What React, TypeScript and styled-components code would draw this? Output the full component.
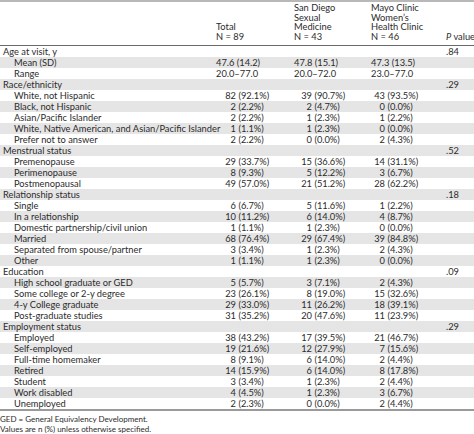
import styled, { createGlobalStyle } from 'styled-components';

type Value = string | [number, string];

interface Line {
  label: string;
  sub?: boolean;
  values?: Value[];
  p?: string;
}

const lines: Line[] = [
  { label: 'Age at visit, y', p: '.84' },
  { label: 'Mean (SD)', sub: true, values: ['47.6 (14.2)', '47.8 (15.1)', '47.3 (13.5)'] },
  { label: 'Range', sub: true, values: ['20.0–77.0', '20.0–72.0', '23.0–77.0'] },
  { label: 'Race/ethnicity', p: '.29' },
  { label: 'White, not Hispanic', sub: true, values: [[82, '92.1%'], [39, '90.7%'], [43, '93.5%']] },
  { label: 'Black, not Hispanic', sub: true, values: [[2, '2.2%'], [2, '4.7%'], [0, '0.0%']] },
  { label: 'Asian/Pacific Islander', sub: true, values: [[2, '2.2%'], [1, '2.3%'], [1, '2.2%']] },
  { label: 'White, Native American, and Asian/Pacific Islander', sub: true, values: [[1, '1.1%'], [1, '2.3%'], [0, '0.0%']] },
  { label: 'Prefer not to answer', sub: true, values: [[2, '2.2%'], [0, '0.0%'], [2, '4.3%']] },
  { label: 'Menstrual status', p: '.52' },
  { label: 'Premenopause', sub: true, values: [[29, '33.7%'], [15, '36.6%'], [14, '31.1%']] },
  { label: 'Perimenopause', sub: true, values: [[8, '9.3%'], [5, '12.2%'], [3, '6.7%']] },
  { label: 'Postmenopausal', sub: true, values: [[49, '57.0%'], [21, '51.2%'], [28, '62.2%']] },
  { label: 'Relationship status', p: '.18' },
  { label: 'Single', sub: true, values: [[6, '6.7%'], [5, '11.6%'], [1, '2.2%']] },
  { label: 'In a relationship', sub: true, values: [[10, '11.2%'], [6, '14.0%'], [4, '8.7%']] },
  { label: 'Domestic partnership/civil union', sub: true, values: [[1, '1.1%'], [1, '2.3%'], [0, '0.0%']] },
  { label: 'Married', sub: true, values: [[68, '76.4%'], [29, '67.4%'], [39, '84.8%']] },
  { label: 'Separated from spouse/partner', sub: true, values: [[3, '3.4%'], [1, '2.3%'], [2, '4.3%']] },
  { label: 'Other', sub: true, values: [[1, '1.1%'], [1, '2.3%'], [0, '0.0%']] },
  { label: 'Education', p: '.09' },
  { label: 'High school graduate or GED', sub: true, values: [[5, '5.7%'], [3, '7.1%'], [2, '4.3%']] },
  { label: 'Some college or 2-y degree', sub: true, values: [[23, '26.1%'], [8, '19.0%'], [15, '32.6%']] },
  { label: '4-y College graduate', sub: true, values: [[29, '33.0%'], [11, '26.2%'], [18, '39.1%']] },
  { label: 'Post-graduate studies', sub: true, values: [[31, '35.2%'], [20, '47.6%'], [11, '23.9%']] },
  { label: 'Employment status', p: '.29' },
  { label: 'Employed', sub: true, values: [[38, '43.2%'], [17, '39.5%'], [21, '46.7%']] },
  { label: 'Self-employed', sub: true, values: [[19, '21.6%'], [12, '27.9%'], [7, '15.6%']] },
  { label: 'Full-time homemaker', sub: true, values: [[8, '9.1%'], [6, '14.0%'], [2, '4.4%']] },
  { label: 'Retired', sub: true, values: [[14, '15.9%'], [6, '14.0%'], [8, '17.8%']] },
  { label: 'Student', sub: true, values: [[3, '3.4%'], [1, '2.3%'], [2, '4.4%']] },
  { label: 'Work disabled', sub: true, values: [[4, '4.5%'], [1, '2.3%'], [3, '6.7%']] },
  { label: 'Unemployed', sub: true, values: [[2, '2.3%'], [0, '0.0%'], [2, '4.4%']] },
];

// where the count ends inside each data column, so the brackets line up
const countWidths = [20, 18, 14];

export default function App() {
  return (
    <>
      <GlobalStyle />
      <Page>
        <Table>
          <HeaderRow>
            <span />
            <HeadCell>
              Total
              <br />N = 89
            </HeadCell>
            <HeadCell>
              San Diego
              <br />
              Sexual
              <br />
              Medicine
              <br />N = 43
            </HeadCell>
            <HeadCell>
              Mayo Clinic
              <br />
              Women’s
              <br />
              Health Clinic
              <br />N = 46
            </HeadCell>
            <HeadCell>
              <i>P</i> value
            </HeadCell>
          </HeaderRow>
          {lines.map((line, i) => (
            <Row key={i} $shade={i % 2 === 1}>
              <Label $sub={!!line.sub}>{line.label}</Label>
              {[0, 1, 2].map((c) => {
                const v = line.values?.[c];
                if (v === undefined) return <Cell key={c} />;
                if (typeof v === 'string') return <Cell key={c}>{v}</Cell>;
                return (
                  <Cell key={c}>
                    <Count $w={countWidths[c]}>{v[0]}</Count>
                    &nbsp;({v[1]})
                  </Cell>
                );
              })}
              <Cell>{line.p}</Cell>
            </Row>
          ))}
        </Table>
        <Footnote>
          GED = General Equivalency Development.
          <br />
          Values are n (%) unless otherwise specified.
        </Footnote>
      </Page>
    </>
  );
}

const GlobalStyle = createGlobalStyle`
  body {
    margin: 0;
    background: #fff;
  }
`;

const columns = '216px 78px 77px 75px 1fr';

const Page = styled.div`
  width: 474px;
  height: 434px;
  overflow: hidden;
  font-family: Lato, 'Liberation Sans', sans-serif;
  font-size: 9.3px;
  color: #2b2b2b;
`;

const Table = styled.div`
  border-top: 2px solid #b8b8b8;
  border-bottom: 2px solid #9a9a9a;
`;

const HeaderRow = styled.div`
  display: grid;
  grid-template-columns: ${columns};
  align-items: end;
  height: 44px;
  box-sizing: border-box;
  padding: 1px 0 5px;
  border-bottom: 1px solid #6a6a6a;
  line-height: 9.5px;
`;

const HeadCell = styled.div`
  white-space: nowrap;
`;

const Row = styled.div<{ $shade: boolean }>`
  display: grid;
  grid-template-columns: ${columns};
  height: 11px;
  line-height: 11px;
  background: ${(p) => (p.$shade ? '#e5e5e5' : '#fff')};
`;

const Label = styled.div<{ $sub: boolean }>`
  padding-left: ${(p) => (p.$sub ? '14px' : '3px')};
  white-space: nowrap;
`;

const Cell = styled.div`
  display: flex;
  white-space: nowrap;
`;

const Count = styled.span<{ $w: number }>`
  display: inline-block;
  width: ${(p) => p.$w}px;
  text-align: right;
`;

const Footnote = styled.div`
  padding-top: 3px;
  line-height: 10px;
  font-size: 8px;
`;
